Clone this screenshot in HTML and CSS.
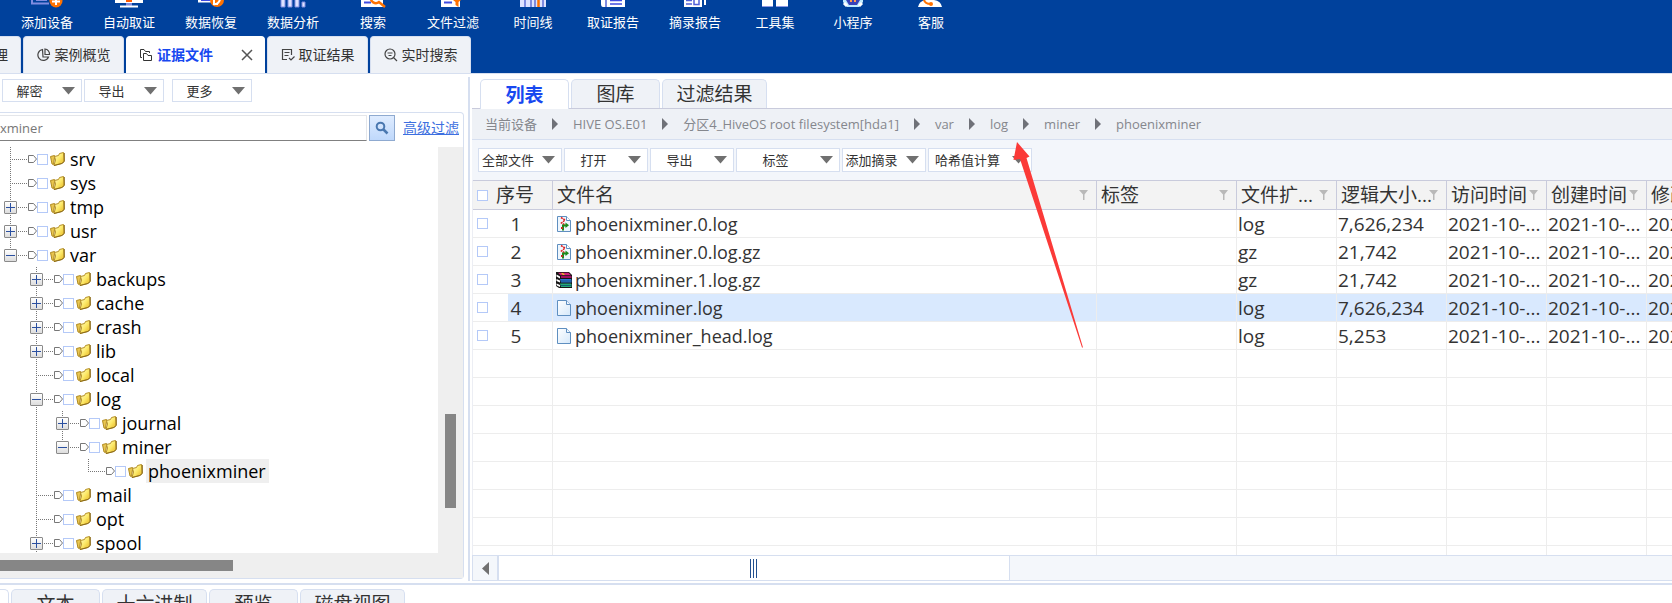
FILE: index.html
```html
<!DOCTYPE html>
<html lang="zh-CN">
<head>
<meta charset="utf-8">
<title>证据文件</title>
<link rel="stylesheet" href="styles.css">
</head>
<body>
<svg class="defs" aria-hidden="true">
  <defs>
    <linearGradient id="gold" x1="0" y1="0" x2="1" y2="1"><stop offset="0" stop-color="#fffbd0"/><stop offset=".5" stop-color="#fdea6a"/><stop offset="1" stop-color="#e3b01c"/></linearGradient>
    <linearGradient id="paper" x1="0" y1="0" x2="1" y2="1"><stop offset="0" stop-color="#fff"/><stop offset="1" stop-color="#d5e8fa"/></linearGradient>
    <symbol id="folder" viewBox="0 0 15 14"><path d="M.5 4.500 4.500 3.500V5.500L3.500 12.500 2 12Z" fill="#e9c650" stroke="#b08a20"/><path d="M4.500 4.500 8.500 3.500 9.500 1.500 13.500.5 14 9.500 11.500 11.500 4 13.500 5.500 8Z" fill="url(#gold)" stroke="#b48f26"/><path d="M14.300 1V9.500L12 11.500 4 13.500" fill="none" stroke="#8b6a18"/></symbol>
    <symbol id="tag" viewBox="0 0 9 8"><path d="M.5.5H5.5L8.5 4 5.500 7.500H.5Z" fill="#fff" stroke="#777"/></symbol>
    <symbol id="down" viewBox="0 0 13 8"><path d="M0 0H13L6.500 7.500Z" fill="#707070"/></symbol>
    <symbol id="right" viewBox="0 0 6 12"><path d="M0 0 6 6 0 12Z" fill="#6f7178"/></symbol>
    <symbol id="funnel" viewBox="0 0 9 10"><path d="M0 0H9L5.500 4.500V10H4V4.500Z" fill="#b9b9b9"/></symbol>
    <symbol id="page" viewBox="0 0 14 16"><path d="M.5.5H9.500L13.500 4.500V15.500H.5Z" fill="url(#paper)" stroke="#5f8fc0"/><path d="M9.500.5V4.500H13.500" fill="#eef6ff" stroke="#5f8fc0"/></symbol>
    <symbol id="logpage" viewBox="0 0 14 16"><path d="M.5.5H9.500L13.500 4.500V15.500H.5Z" fill="#eef6fd" stroke="#5f8fc0"/><path d="M9.500.5V4.500H13.500" fill="#fff" stroke="#5f8fc0"/><path d="M4 1.500 8 4 4.500 7 8 9" fill="none" stroke="#e02020" stroke-width="1.500" stroke-dasharray="2 .7"/><path d="M6 14.500V9.500H9" fill="none" stroke="#1c8a1c" stroke-width="2"/><path d="M8.500 6.500 12 9.300 8.500 12Z" fill="#1c8a1c"/><path d="M4 11h2v2H4z" fill="#c03020"/></symbol>
    <symbol id="books" viewBox="0 0 16 16"><path d="M0 0H13L16 3V16H3L0 14Z" fill="#151515"/><path d="M2 .8H12.500L15 3.200H4.500Z" fill="#d0207a"/><path d="M5 4H15.500V6H5Z" fill="#a01060"/><path d="M4 7H15L15.500 8V10.500H5Z" fill="#2b78d0"/><path d="M4 11.500H15L15.500 12.500V15H5Z" fill="#23a878"/><path d="M5 9H15.500M5 13.500H15.500" stroke="#0f3d70" stroke-width=".7"/><path d="M.5 2.500 4 4.500V6.500L.5 4.500ZM.5 7 4 8.500V10.500L.5 9ZM.5 11.500 4 13V15L.5 13.200Z" fill="#fff"/><path d="M5 1H7L9 3H7Z" fill="#f0c020"/></symbol>
  </defs>
</svg>

<header class="top">
  <nav class="tools" aria-label="工具">
    <button class="tool wide" type="button"><svg width="36" height="8"><path d="M3 0V3.500H20" fill="none" stroke="#7f8ce0" stroke-width="2"/><path d="M7 .5H18" stroke="#7f8ce0"/><circle cx="27" cy="1" r="6.500" fill="#ff7200"/><path d="M27 0V5M23 1.500H31" stroke="#fff" stroke-width="2"/></svg>添加设备</button>
    <button class="tool wide" type="button"><svg width="30" height="8"><path d="M1 0H29V3H1Z" fill="#fff"/><path d="M12 0H18V2H12Z" fill="#ff5a00"/><path d="M12 3H18V6H12Z" fill="#7f8ce0"/><path d="M6 5.500H24V7.500H6Z" fill="#fff"/></svg>自动取证</button>
    <button class="tool wide" type="button"><svg width="30" height="8"><path d="M2 0H18V2.500H2Z" fill="#fff"/><path d="M5 .5H14" stroke="#3f4ce0"/><circle cx="21" cy="0" r="7" fill="#ff7200"/><path d="M17 4Q23 5 24-1M18 0V4H22" fill="none" stroke="#fff" stroke-width="2"/></svg>数据恢复</button>
    <button class="tool wide" type="button"><svg width="28" height="8"><path d="M2 0V7H6V0M9 0V7H13V0M16 0V7H20V0M23 2V7H26V2Z" fill="#dfe3ff" stroke="#7f8ce0"/></svg>数据分析</button>
    <button class="tool" type="button"><svg width="28" height="8"><path d="M2 0H24V7H2Z" fill="#fff"/><path d="M5 2.500H12" stroke="#3f4ce0" stroke-width="2"/><path d="M12-3A5 5 0 0 0 20 2L26 7" fill="none" stroke="#ff7200" stroke-width="2.500"/></svg>搜索</button>
    <button class="tool wide" type="button"><svg width="28" height="8"><path d="M2 0H21V7H2Z" fill="#fff"/><path d="M5 2.500H13" stroke="#3f4ce0" stroke-width="2"/><path d="M14 0H22L19.500 2V7L16.500 5V2Z" fill="#ff7200"/></svg>文件过滤</button>
    <button class="tool" type="button"><svg width="28" height="8"><path d="M1 0H27V7H1Z" fill="#dfe3ff"/><path d="M6 0V7M12 0V7M16 0V7M24 0V7" stroke="#7f8ce0" stroke-width="2"/><path d="M19.500 0V7" stroke="#ff7200" stroke-width="2.500"/></svg>时间线</button>
    <button class="tool wide" type="button"><svg width="28" height="8"><path d="M2 0H26V7H4Q2 7 2 4Z" fill="#fff"/><path d="M7 0V7" stroke="#7f8ce0" stroke-width="2"/><path d="M11 .5H23M11 4H23" stroke="#3f4ce0" stroke-width="1.500"/></svg>取证报告</button>
    <button class="tool wide" type="button"><svg width="28" height="8"><path d="M3 0H21V7H3Z" fill="#fff"/><path d="M5 .5H11M5 4H11M13 0V4.500H18V0" fill="none" stroke="#5060d8" stroke-width="1.500"/><path d="M24 0V5" stroke="#fff" stroke-width="2"/></svg>摘录报告</button>
    <button class="tool" type="button"><svg width="28" height="8"><path d="M1 0H12V7H1ZM15 0H27V7H15Z" fill="#fff"/><path d="M1 6.500H12M15 6.500H27" stroke="#8c98e4"/></svg>工具集</button>
    <button class="tool" type="button"><svg width="28" height="8"><path d="M4 0H24V2L20 7H8L4 2Z" fill="#bfeaff"/><path d="M7 0H21L18 5H10Z" fill="#3942b8"/><path d="M12 0V2M16 0V2" stroke="#ff9b50" stroke-width="2"/><path d="M5 3 8 6M23 3 20 6" stroke="#fff" stroke-width="3"/></svg>小程序</button>
    <button class="tool" type="button"><svg width="28" height="8"><path d="M1 7Q2 1 9 0H17Q24 1 25 7Z" fill="#fff"/><path d="M7 0Q8 4 14 4" fill="none" stroke="#ff7200" stroke-width="2"/><circle cx="14" cy="4" r="2" fill="#ff7200"/></svg>客服</button>
  </nav>
  <nav class="pages" aria-label="页面">
    <button class="pagetab cut" type="button">理</button>
    <button class="pagetab" type="button"><svg width="14" height="14" fill="none" stroke="#444" stroke-width="1.200"><path d="M5.500 1.500A5.500 5.500 0 1 0 11.500 9H6Z"/><path d="M8 1V6.500H12.500A5 5 0 0 0 8 1Z"/></svg>案例概览</button>
    <button class="pagetab active" type="button"><svg width="14" height="14" fill="none" stroke="#333" stroke-width="1"><path d="M3 9.500H1.500V1.500H5L6.500 3.500H10.500V5"/><path d="M4.500 5.500H7.500L9 7.500H12.500V12.500H4.500Z"/></svg>证据文件<svg class="close" width="14" height="14" stroke="#555" stroke-width="1.500"><path d="M2 2 12 12M12 2 2 12"/></svg></button>
    <button class="pagetab" type="button"><svg width="14" height="14" fill="none" stroke="#444" stroke-width="1.200"><path d="M6 11.500H1.500V1.500H10.500V7M3.500 4.500H8.500M3.500 7.500H7.500M8 10 10 12 13.500 8.500"/></svg>取证结果</button>
    <button class="pagetab" type="button"><svg width="14" height="14" fill="none" stroke="#444" stroke-width="1.200"><circle cx="6" cy="6" r="5"/><path d="M9.500 9.500 13 13M3.500 5H8.500M4.500 7.500H7.500"/></svg>实时搜索</button>
  </nav>
</header>

<main class="main">
  <section class="left">
    <div class="actions">
      <button class="menu" type="button"><span>解密</span><svg width="13" height="8"><use href="#down"/></svg></button>
      <button class="menu" type="button"><span>导出</span><svg width="13" height="8"><use href="#down"/></svg></button>
      <button class="menu apart" type="button"><span>更多</span><svg width="13" height="8"><use href="#down"/></svg></button>
    </div>
    <div class="frame">
      <form class="search">
        <input type="text" value="xminer" aria-label="搜索">
        <button type="button" aria-label="搜索"><svg width="14" height="14" fill="none" stroke="#4a78b0"><circle cx="5.500" cy="5.500" r="3.800" stroke-width="2"/><path d="M8.500 8.500 12.500 12.500" stroke-width="2.500"/></svg></button>
        <a href="#">高级过滤</a>
      </form>
      <div class="treebox">
        <ul class="tree">
          <li><i class="twig mid"></i><svg class="tag"><use href="#tag"/></svg><input type="checkbox" id="t1"><svg class="fold"><use href="#folder"/></svg><label for="t1">srv</label></li>
          <li><i class="twig mid"></i><svg class="tag"><use href="#tag"/></svg><input type="checkbox" id="t2"><svg class="fold"><use href="#folder"/></svg><label for="t2">sys</label></li>
          <li><i class="twig mid"><b class="box plus"></b></i><svg class="tag"><use href="#tag"/></svg><input type="checkbox" id="t3"><svg class="fold"><use href="#folder"/></svg><label for="t3">tmp</label></li>
          <li><i class="twig mid"><b class="box plus"></b></i><svg class="tag"><use href="#tag"/></svg><input type="checkbox" id="t4"><svg class="fold"><use href="#folder"/></svg><label for="t4">usr</label></li>
          <li><i class="twig end"><b class="box"></b></i><svg class="tag"><use href="#tag"/></svg><input type="checkbox" id="t5"><svg class="fold"><use href="#folder"/></svg><label for="t5">var</label></li>
          <li><i class="guide"></i><i class="twig mid"><b class="box plus"></b></i><svg class="tag"><use href="#tag"/></svg><input type="checkbox" id="t6"><svg class="fold"><use href="#folder"/></svg><label for="t6">backups</label></li>
          <li><i class="guide"></i><i class="twig mid"><b class="box plus"></b></i><svg class="tag"><use href="#tag"/></svg><input type="checkbox" id="t7"><svg class="fold"><use href="#folder"/></svg><label for="t7">cache</label></li>
          <li><i class="guide"></i><i class="twig mid"><b class="box plus"></b></i><svg class="tag"><use href="#tag"/></svg><input type="checkbox" id="t8"><svg class="fold"><use href="#folder"/></svg><label for="t8">crash</label></li>
          <li><i class="guide"></i><i class="twig mid"><b class="box plus"></b></i><svg class="tag"><use href="#tag"/></svg><input type="checkbox" id="t9"><svg class="fold"><use href="#folder"/></svg><label for="t9">lib</label></li>
          <li><i class="guide"></i><i class="twig mid"></i><svg class="tag"><use href="#tag"/></svg><input type="checkbox" id="t10"><svg class="fold"><use href="#folder"/></svg><label for="t10">local</label></li>
          <li><i class="guide"></i><i class="twig mid"><b class="box"></b></i><svg class="tag"><use href="#tag"/></svg><input type="checkbox" id="t11"><svg class="fold"><use href="#folder"/></svg><label for="t11">log</label></li>
          <li><i class="guide"></i><i class="guide line"></i><i class="twig mid"><b class="box plus"></b></i><svg class="tag"><use href="#tag"/></svg><input type="checkbox" id="t12"><svg class="fold"><use href="#folder"/></svg><label for="t12">journal</label></li>
          <li><i class="guide"></i><i class="guide line"></i><i class="twig end"><b class="box"></b></i><svg class="tag"><use href="#tag"/></svg><input type="checkbox" id="t13"><svg class="fold"><use href="#folder"/></svg><label for="t13">miner</label></li>
          <li><i class="guide"></i><i class="guide line"></i><i class="guide"></i><i class="twig end"></i><svg class="tag"><use href="#tag"/></svg><input type="checkbox" id="t14"><svg class="fold"><use href="#folder"/></svg><label class="current" for="t14">phoenixminer</label></li>
          <li><i class="guide"></i><i class="twig mid"></i><svg class="tag"><use href="#tag"/></svg><input type="checkbox" id="t15"><svg class="fold"><use href="#folder"/></svg><label for="t15">mail</label></li>
          <li><i class="guide"></i><i class="twig mid"></i><svg class="tag"><use href="#tag"/></svg><input type="checkbox" id="t16"><svg class="fold"><use href="#folder"/></svg><label for="t16">opt</label></li>
          <li><i class="guide"></i><i class="twig mid"><b class="box plus"></b></i><svg class="tag"><use href="#tag"/></svg><input type="checkbox" id="t17"><svg class="fold"><use href="#folder"/></svg><label for="t17">spool</label></li>
        </ul>
        <div class="vbar"><div class="vthumb"></div></div>
      </div>
      <div class="hbar"><div class="hthumb"></div></div>
    </div>
  </section>

  <section class="right">
    <nav class="views" aria-label="视图">
      <button class="view active" type="button">列表</button>
      <button class="view" type="button">图库</button>
      <button class="view" type="button">过滤结果</button>
    </nav>
    <nav class="crumbs" aria-label="路径">
      <a href="#">当前设备</a><svg width="6" height="12"><use href="#right"/></svg>
      <a href="#">HIVE OS.E01</a><svg width="6" height="12"><use href="#right"/></svg>
      <a href="#">分区4_HiveOS root filesystem[hda1]</a><svg width="6" height="12"><use href="#right"/></svg>
      <a href="#">var</a><svg width="6" height="12"><use href="#right"/></svg>
      <a href="#">log</a><svg width="6" height="12"><use href="#right"/></svg>
      <a href="#">miner</a><svg width="6" height="12"><use href="#right"/></svg>
      <a href="#">phoenixminer</a>
    </nav>
    <div class="bar">
      <div class="menu"><select aria-label="文件范围"><option>全部文件</option></select><svg width="13" height="8"><use href="#down"/></svg></div>
      <button class="menu" type="button"><span>打开</span><svg width="13" height="8"><use href="#down"/></svg></button>
      <button class="menu" type="button"><span>导出</span><svg width="13" height="8"><use href="#down"/></svg></button>
      <button class="menu long" type="button"><span>标签</span><svg width="13" height="8"><use href="#down"/></svg></button>
      <button class="menu" type="button"><span>添加摘录</span><svg width="13" height="8"><use href="#down"/></svg></button>
      <button class="menu long" type="button"><span>哈希值计算</span><svg width="13" height="8"><use href="#down"/></svg></button>
    </div>
    <div class="grid">
      <table>
        <colgroup><col class="c-check"><col class="c-no"><col><col class="c-tag"><col class="c-std"><col class="c-size"><col class="c-std"><col class="c-std"><col class="c-std"></colgroup>
        <thead>
          <tr>
            <th class="check"><input type="checkbox" aria-label="全选"></th>
            <th class="no">序号</th>
            <th><div><span>文件名</span><svg width="9" height="10"><use href="#funnel"/></svg></div></th>
            <th><div><span>标签</span><svg width="9" height="10"><use href="#funnel"/></svg></div></th>
            <th><div><span>文件扩...</span><svg width="9" height="10"><use href="#funnel"/></svg></div></th>
            <th><div><span>逻辑大小...</span><svg width="9" height="10"><use href="#funnel"/></svg></div></th>
            <th><div><span>访问时间</span><svg width="9" height="10"><use href="#funnel"/></svg></div></th>
            <th><div><span>创建时间</span><svg width="9" height="10"><use href="#funnel"/></svg></div></th>
            <th><div><span>修改时间</span><svg width="9" height="10"><use href="#funnel"/></svg></div></th>
          </tr>
        </thead>
        <tbody>
          <tr><td class="check"><input type="checkbox" aria-label="选择 1"></td><td class="no">1</td><td><div class="file"><svg width="16" height="16"><use href="#logpage"/></svg>phoenixminer.0.log</div></td><td></td><td>log</td><td>7,626,234</td><td>2021-10-...</td><td>2021-10-...</td><td>2021-10-...</td></tr>
          <tr><td class="check"><input type="checkbox" aria-label="选择 2"></td><td class="no">2</td><td><div class="file"><svg width="16" height="16"><use href="#logpage"/></svg>phoenixminer.0.log.gz</div></td><td></td><td>gz</td><td>21,742</td><td>2021-10-...</td><td>2021-10-...</td><td>2021-10-...</td></tr>
          <tr><td class="check"><input type="checkbox" aria-label="选择 3"></td><td class="no">3</td><td><div class="file"><svg width="16" height="16"><use href="#books"/></svg>phoenixminer.1.log.gz</div></td><td></td><td>gz</td><td>21,742</td><td>2021-10-...</td><td>2021-10-...</td><td>2021-10-...</td></tr>
          <tr class="selected"><td class="check"><input type="checkbox" aria-label="选择 4"></td><td class="no">4</td><td><div class="file"><svg width="16" height="16"><use href="#page"/></svg>phoenixminer.log</div></td><td></td><td>log</td><td>7,626,234</td><td>2021-10-...</td><td>2021-10-...</td><td>2021-10-...</td></tr>
          <tr><td class="check"><input type="checkbox" aria-label="选择 5"></td><td class="no">5</td><td><div class="file"><svg width="16" height="16"><use href="#page"/></svg>phoenixminer_head.log</div></td><td></td><td>log</td><td>5,253</td><td>2021-10-...</td><td>2021-10-...</td><td>2021-10-...</td></tr>
          <tr><td></td><td class="no"></td><td></td><td></td><td></td><td></td><td></td><td></td><td></td></tr>
          <tr><td></td><td class="no"></td><td></td><td></td><td></td><td></td><td></td><td></td><td></td></tr>
          <tr><td></td><td class="no"></td><td></td><td></td><td></td><td></td><td></td><td></td><td></td></tr>
          <tr><td></td><td class="no"></td><td></td><td></td><td></td><td></td><td></td><td></td><td></td></tr>
          <tr><td></td><td class="no"></td><td></td><td></td><td></td><td></td><td></td><td></td><td></td></tr>
          <tr><td></td><td class="no"></td><td></td><td></td><td></td><td></td><td></td><td></td><td></td></tr>
          <tr><td></td><td class="no"></td><td></td><td></td><td></td><td></td><td></td><td></td><td></td></tr>
          <tr><td></td><td class="no"></td><td></td><td></td><td></td><td></td><td></td><td></td><td></td></tr>
        </tbody>
      </table>
    </div>
    <div class="scroll">
      <button type="button" aria-label="向左滚动"><svg width="7" height="13"><path d="M7 0V13L0 6.500Z" fill="#707070"/></svg></button>
      <div class="thumb"><i></i><i></i><i></i></div>
    </div>
  </section>
</main>

<footer class="bottom">
  <button class="view first" type="button" aria-label="视图"></button>
  <button class="view" type="button">文本</button>
  <button class="view" type="button">十六进制</button>
  <button class="view" type="button">预览</button>
  <button class="view" type="button">磁盘视图</button>
</footer>

<svg class="arrow" width="72" height="208" viewBox="0 0 72 208" aria-hidden="true"><path d="M4 1 16.500 15.500 13.500 17 70 206.500 69 206.500 7 18 .5 19Z" fill="#fb3a38"/></svg>
</body>
</html>
```

FILE: styles.css
```css
* { box-sizing: border-box; }

body {
  margin: 0;
  height: 100vh;
  overflow: hidden;
  display: flex;
  flex-direction: column;
  position: relative;
  background: #fff;
  color: #333;
  font: 13px/16px "Open Sans", "Noto Sans CJK SC", sans-serif;
}

button, input, select { font: inherit; color: inherit; margin: 0; }
button { padding: 0; border: 0; background: none; }
svg { flex: none; display: block; }
.defs { position: absolute; width: 0; height: 0; }

input[type="checkbox"] {
  appearance: none;
  flex: none;
  display: block;
  width: 11px;
  height: 11px;
  background: #fff;
  border: 1px solid #b4c9f8;
}

/* top bar */
.top { flex: none; background: #00419c; border-bottom: 1px solid #d6dff0; }
.tools { display: flex; height: 36px; padding-left: 6px; }
.tool {
  width: 78px;
  display: flex;
  flex-direction: column;
  align-items: center;
  gap: 6px;
  color: #fff;
}
.tool.wide { width: 82px; }

.pages { display: flex; gap: 2px; height: 37px; }
.pagetab {
  display: flex;
  align-items: center;
  justify-content: center;
  gap: 4px;
  width: 101px;
  background: #eff2f7;
  border: 1px solid #d6dff0;
  border-bottom: 0;
  border-radius: 4px 4px 0 0;
  font-size: 14px;
  white-space: nowrap;
}
.pagetab.cut { width: 21px; border-left: 0; border-radius: 0 4px 0 0; justify-content: flex-end; overflow: hidden; padding-right: 12px; }
.pagetab.active { width: 139px; background: #fff; border-color: #fff; color: #1748f0; font-weight: 700; justify-content: flex-start; padding: 0 10px 0 12px; }
.pagetab .close { margin-left: auto; }

.main { flex: 1; min-height: 0; display: flex; border-bottom: 2px solid #d6dff0; padding: 3px 0 2px; }

/* menu buttons */
.menu {
  display: flex;
  align-items: center;
  width: 84px;
  height: 24px;
  padding-right: 6px;
  background: #fff;
  border: 1px solid #d6dff0;
}
.menu span { flex: 1; padding-right: 6px; text-align: center; white-space: nowrap; }
.menu select { flex: 1; min-width: 0; appearance: none; border: 0; background: none; padding: 0 3px; }
.menu.long { width: 104px; }

/* left pane */
.left { flex: none; width: 470px; display: flex; flex-direction: column; border-right: 2px solid #d6dff0; }
.actions { display: flex; gap: 2px; padding: 2px; }
.actions .menu { width: 80px; height: 23px; }
.actions .apart { margin-left: 6px; }
.frame {
  flex: 1;
  min-height: 0;
  display: flex;
  flex-direction: column;
  margin: 8px 4px 2px 0;
  border: 1px solid #d6dff0;
  border-left: 0;
  border-radius: 0 4px 4px 0;
}
.search { display: flex; align-items: center; gap: 2px; padding: 2px 4px 6px 0; }
.search input { flex: 1; min-width: 0; height: 26px; padding: 0; border: 1px solid #e4e6ea; border-left: 0; border-bottom-color: #808080; color: #777; }
.search button { width: 26px; height: 26px; display: flex; align-items: center; justify-content: center; border: 1px solid #8faad0; background: linear-gradient(#dfecff, #bfd8fb); }
.search a { margin-left: 6px; font-size: 14px; color: #3d6fe0; }

.treebox { flex: 1; min-height: 0; display: flex; }
.tree { flex: 1; margin: 0; padding: 0; list-style: none; overflow: hidden; font-size: 18px; line-height: 24px; color: #000; }
.tree li { display: flex; align-items: center; height: 24px; }
.tree label { padding: 0 3px 0 2px; white-space: nowrap; }
.tree .current { background: #efefef; }
.guide { flex: none; width: 26px; height: 24px; }
.guide.line { background: repeating-linear-gradient(#777 0 1px, #fff 1px 2px) 10px 0 / 1px 100% no-repeat; }
.twig {
  flex: none;
  display: flex;
  align-items: center;
  width: 28px;
  height: 24px;
  padding-left: 4px;
  background:
    repeating-linear-gradient(#777 0 1px, #fff 1px 2px) 10px 0 / 1px 24px no-repeat,
    repeating-linear-gradient(90deg, #777 0 1px, #fff 1px 2px) 10px 12px / 18px 1px no-repeat;
}
.twig.end { background-size: 1px 12px, 18px 1px; }
.box {
  width: 13px;
  height: 13px;
  border: 1px solid #8a8a8a;
  border-radius: 1px;
  background:
    linear-gradient(#2b50a0, #2b50a0) center / 9px 1px no-repeat,
    linear-gradient(#fff, #ddd);
}
.box.plus {
  background:
    linear-gradient(#2b50a0, #2b50a0) center / 9px 1px no-repeat,
    linear-gradient(#2b50a0, #2b50a0) center / 1px 9px no-repeat,
    linear-gradient(#fff, #ddd);
}
.tag { width: 9px; height: 8px; }
.fold { width: 15px; height: 14px; margin: 0 3px 0 2px; }
.vbar { width: 25px; background: #efefef; padding: 267px 7px 0; }
.vthumb { height: 94px; background: #868686; }
.hbar { flex: none; height: 25px; background: #efefef; padding: 7px 0; }
.hthumb { width: 233px; height: 11px; background: #868686; }

/* right pane */
.right { flex: 1; min-width: 0; display: flex; flex-direction: column; margin-left: 2px; }
.views { display: flex; gap: 2px; padding: 2px 8px 0; border-bottom: 1px solid #c9cbdc; }
.view {
  width: 89px;
  height: 29px;
  background: #eff2f7;
  border: 1px solid #d6dff0;
  border-bottom: 0;
  border-radius: 5px 5px 0 0;
  font-size: 19px;
  line-height: 28px;
  white-space: nowrap;
}
.view:nth-child(3) { width: 105px; }
.view.active { background: #fff; color: #1748f0; font-weight: 700; margin-bottom: -1px; height: 30px; }

.crumbs { display: flex; align-items: center; gap: 15px; height: 31px; padding-left: 13px; background: #eef1f6; border-bottom: 1px solid #d6dff0; white-space: nowrap; }
.crumbs a { color: #85878d; text-decoration: none; }

.bar { display: flex; gap: 2px; padding: 8px 6px; background: #f3f6fb; }

.grid { flex: 1; min-height: 0; overflow: hidden; border-left: 1px solid #eceef4; }
table { width: calc(100% + 75px); table-layout: fixed; border-collapse: separate; border-spacing: 0; font-size: 19px; line-height: 26px; }
.c-check { width: 35px; }
.c-no { width: 45px; }
.c-tag { width: 140px; }
.c-std { width: 100px; }
.c-size { width: 110px; }
th { height: 30px; padding: 0 8px 0 4px; font-weight: 400; text-align: left; background: #f3f3f3; border: solid #c9cbdc; border-width: 1px 1px 1px 0; white-space: nowrap; }
th div { display: flex; align-items: center; }
th span { flex: 1; min-width: 0; }
td { height: 28px; padding: 0 0 0 1px; border: solid #ededed; border-width: 0 1px 1px 0; white-space: nowrap; }
th.check, td:first-child { padding: 0 0 0 4px; border-right: 0; }
th.no { padding: 0; text-indent: -12px; }
td.no { padding: 0 28px 0 0; text-align: center; }
.file { display: flex; align-items: center; gap: 3px; padding-left: 2px; font-size: 18px; }
.selected td:not(.check) { background: #d9e9fe; }

.scroll { flex: none; display: flex; height: 26px; background: #f4f7fb; border: 1px solid #d6dff0; border-right: 0; }
.scroll button { width: 26px; display: flex; align-items: center; justify-content: center; border-right: 2px solid #d6dff0; }
.thumb { flex: none; width: calc(43% - 5px); display: flex; align-items: center; justify-content: center; gap: 2px; background: #fff; border-right: 1px solid #d6dff0; }
.thumb i { width: 1px; height: 19px; background: #22508f; }

/* bottom tabs */
.bottom { flex: none; display: flex; gap: 2px; height: 18px; padding-top: 4px; overflow: hidden; }
.bottom .view { width: 89px; flex: none; }
.bottom .first { width: 9px; background: #fff; border-left: 0; border-radius: 0 5px 0 0; }
.bottom .view:nth-child(odd):not(.first) { width: 105px; }

/* pointer drawn over the table */
.arrow { position: absolute; left: 1013px; top: 141px; pointer-events: none; }
```
